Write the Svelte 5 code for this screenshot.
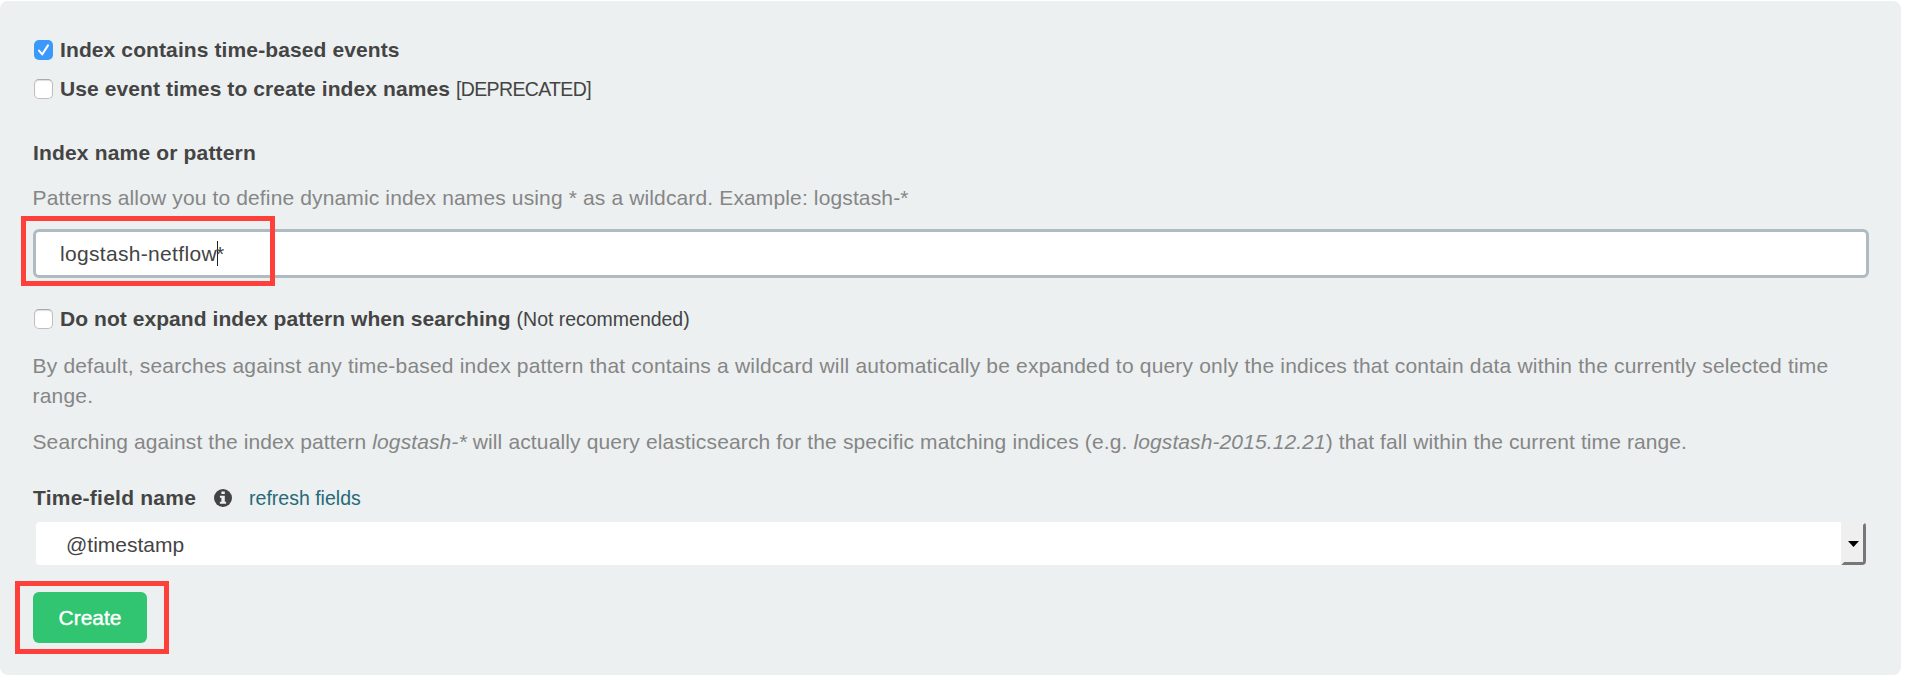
<script>
  let timeBased = $state(true);
  let eventTimes = $state(false);
  let noExpand = $state(false);
</script>

{#snippet box(on)}
  <span class="box" class:on>
    {#if on}
      <svg width="19" height="20" viewBox="0 0 19 20"><path d="M5 10.6 8.2 14.4 14 5.4" fill="none" stroke="#fff" stroke-width="2" stroke-linecap="round" stroke-linejoin="round" /></svg>
    {/if}
  </span>
{/snippet}

<form class="panel" onsubmit={(e) => e.preventDefault()}>
  <button type="button" class="check first" onclick={() => (timeBased = !timeBased)}>
    {@render box(timeBased)}<b class="l1">Index contains time-based events</b>
  </button>
  <button type="button" class="check second" onclick={() => (eventTimes = !eventTimes)}>
    {@render box(eventTimes)}<b class="l2">Use event times to create index names</b><small class="dep">[DEPRECATED]</small>
  </button>

  <div class="heading"><b>Index name or pattern</b></div>
  <p class="help patterns">Patterns allow you to define dynamic index names using * as a wildcard. Example: logstash-*</p>

  <div class="field">
    <div class="input"><span class="value">logstash-netflow</span><span class="caret"></span><span class="star">*</span></div>
    <div class="mark mark-input"></div>
  </div>

  <button type="button" class="check third" onclick={() => (noExpand = !noExpand)}>
    {@render box(noExpand)}<b class="l3">Do not expand index pattern when searching</b><small>(Not recommended)</small>
  </button>
  <p class="help default">By default, searches against any time-based index pattern that contains a wildcard will automatically be expanded to query only the indices that contain data within the currently selected time<br />range.</p>
  <p class="help search">Searching against the index pattern{' '}<i>logstash-*</i>{' '}<span class="query">will actually query elasticsearch for the specific matching indices (e.g.</span>{' '}<i>logstash-2015.12.21</i>) that fall within the current time range.</p>

  <div class="time">
    <b>Time-field name</b>
    <svg class="info" width="18" height="18" viewBox="0 0 18 18">
      <circle cx="9" cy="9" r="9" fill="#444" />
      <path d="M7.4 2.4h3.4v2.7H7.4zM5.9 6.7h4.9v6h1.3v2.1H5.9v-2.1h1.5V8.8H5.9z" fill="#ecf0f1" />
    </svg>
    <a href="#refresh">refresh fields</a>
  </div>
  <div class="select">
    <span>@timestamp</span>
    <div class="drop"><svg width="11" height="6" viewBox="0 0 11 6"><path d="M0 0h11L5.5 6z" fill="#000" /></svg></div>
  </div>

  <div class="actions">
    <button type="submit" class="create">Create</button>
    <div class="mark mark-create"></div>
  </div>
</form>

<style>
  :global(body) { margin: 0; background: #fff; }
  .panel {
    box-sizing: border-box;
    width: 1901px;
    height: 674px;
    margin-top: 1px;
    padding: 34px 32px 0 33px;
    display: flex;
    flex-direction: column;
    background: #ecf0f1;
    border-radius: 8px;
    color: #444;
    font: 21px/30px "Liberation Sans", Arial, sans-serif;
    white-space: nowrap;
  }
  .check {
    display: flex;
    align-items: baseline;
    height: 30px;
    padding: 0;
    border: 0;
    background: none;
    color: inherit;
    font: inherit;
  }
  .box {
    box-sizing: border-box;
    align-self: flex-start;
    width: 19px;
    height: 20px;
    margin: 5px 7px 0 1px;
    border: 1px solid #bfbfbf;
    border-top-color: #aaa;
    border-radius: 5px;
    background: #fff;
    box-shadow: inset 0 1px 1px #ddd;
  }
  .box.on { border: 0; background: #3b99fc; box-shadow: none; }
  .box svg { display: block; }
  small { margin-left: 6px; font-size: 19.5px; letter-spacing: -0.02px; }
  .dep { letter-spacing: -0.65px; }
  .l1 { letter-spacing: 0.11px; }
  .l2 { letter-spacing: 0.1px; }
  .l3 { letter-spacing: 0.06px; }
  .second { margin-top: 9px; }
  .heading { margin-top: 34px; letter-spacing: 0.17px; }
  p { margin: 0; }
  .help { margin-left: -0.5px; color: #868686; }
  .patterns { margin-top: 15px; letter-spacing: 0.135px; }
  .field { position: relative; margin-top: 16px; }
  .input {
    box-sizing: border-box;
    display: flex;
    align-items: center;
    width: 1836px;
    height: 49px;
    padding-left: 24px;
    border: 3px solid #b0bbc1;
    border-radius: 6px;
    background: #fff;
  }
  .value { letter-spacing: 0.32px; }
  .caret { width: 1px; height: 25px; margin-right: -1px; background: #222; }
  .star { margin-left: -1px; }
  .mark { position: absolute; box-sizing: border-box; border: 5px solid #ff403a; }
  .mark-input { left: -12px; top: -13px; width: 254px; height: 70px; }
  .third { margin-top: 26px; }
  .default { margin-top: 17px; letter-spacing: 0.185px; }
  .search { margin-top: 16px; letter-spacing: 0.1px; }
  .query { letter-spacing: 0.145px; }
  .time { display: flex; align-items: center; margin-top: 26px; }
  .time b { letter-spacing: 0.24px; }
  .info { margin: 0 17px 0 18px; }
  a { color: #256a78; font-size: 19.5px; text-decoration: none; }
  .select {
    display: flex;
    align-items: center;
    justify-content: space-between;
    width: 1830px;
    height: 43px;
    margin: 9px 0 0 3px;
    border-radius: 4px;
    background: #fff;
  }
  .select span { padding: 2px 0 0 30px; }
  .drop {
    box-sizing: border-box;
    display: flex;
    align-items: center;
    justify-content: center;
    width: 25px;
    height: 43px;
    border: 3px solid #efefef;
    border-right-color: #777;
    border-bottom-color: #777;
    border-radius: 0 4px 4px 0;
    background: #efefef;
  }
  .actions { position: relative; margin-top: 27px; }
  .create {
    display: block;
    width: 114px;
    height: 51px;
    padding: 1px 0 0;
    border: 0;
    border-radius: 6px;
    background: #31c471;
    color: #fff;
    font: inherit;
    -webkit-text-stroke: 0.4px #fff;
  }
  .mark-create { left: -18px; top: -11px; width: 154px; height: 73px; }
</style>
